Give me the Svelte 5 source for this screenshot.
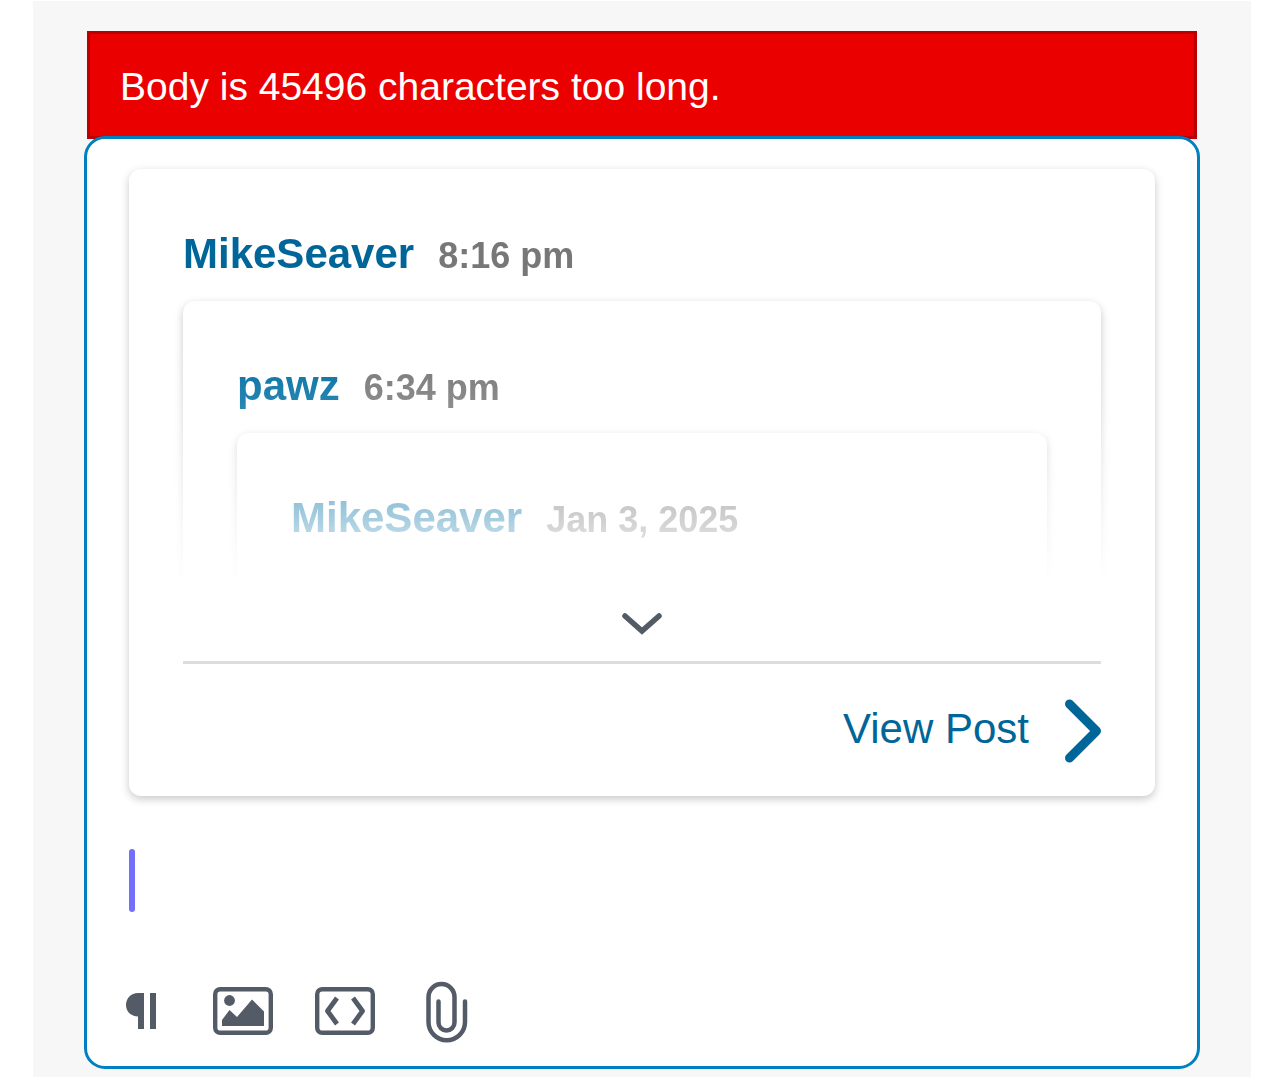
<!--
  Post editor with an embedded quote card and a validation error
-->

<script>
  let body = $state('');
  let expanded = $state(false);

  const error = 'Body is 45496 characters too long.';

  const quote = {
    user: 'MikeSeaver',
    time: '8:16 pm',
    quote: {
      user: 'pawz',
      time: '6:34 pm',
      quote: { user: 'MikeSeaver', time: 'Jan 3, 2025' }
    }
  };
</script>

{#snippet post(item)}
  <header class="meta">
    <a class="user" href="#profile">{item.user}</a>
    <time class="time">{item.time}</time>
  </header>
  {#if item.quote}
    <blockquote class="card nested">
      {@render post(item.quote)}
    </blockquote>
  {/if}
{/snippet}

<main class="page">
  <div class="error" role="alert">{error}</div>

  <form class="editor">
    <article class="card quote">
      <div class="preview" class:expanded>
        {@render post(quote)}
      </div>
      <button
        type="button"
        class="expand"
        aria-label="Expand quote"
        aria-expanded={expanded}
        onclick={() => (expanded = !expanded)}
      >
        <svg width="40" height="24" viewBox="0 0 40 24" aria-hidden="true">
          <path d="M3 4 20 19 37 4" fill="none" stroke="currentColor" stroke-width="5.6" stroke-linecap="round" />
        </svg>
      </button>
      <footer class="card-footer">
        <a class="view" href="#post">
          View Post
          <svg width="36" height="64" viewBox="0 0 36 64" aria-hidden="true">
            <path d="M4.500 5 31.500 32 4.500 59" fill="none" stroke="currentColor" stroke-width="9" stroke-linecap="round" stroke-linejoin="round" />
          </svg>
        </a>
      </footer>
    </article>

    <div class="field">
      <span class="caret" aria-hidden="true"></span>
      <textarea class="input" aria-label="Body" rows="1" bind:value={body}></textarea>
    </div>

    <div class="toolbar" role="toolbar" aria-label="Formatting">
      <button type="button" class="tool format" aria-label="Paragraph format">
        <svg width="30" height="36" viewBox="0 0 30 36" aria-hidden="true">
          <path d="M12 0h6v36h-6V23.500C5 23.500 0 18.500 0 12S5 0 12 0zM24 0h6v36h-6z" fill="currentColor" />
        </svg>
      </button>
      <button type="button" class="tool" aria-label="Insert image">
        <svg width="60" height="48" viewBox="0 0 60 48" aria-hidden="true">
          <rect x="2.200" y="2.200" width="55.600" height="43.600" rx="5" fill="none" stroke="currentColor" stroke-width="4.400" />
          <circle cx="16.500" cy="13.500" r="5.400" fill="currentColor" />
          <path d="M9 39V33L16.500 23 24 30 39 12.500 51 24.500V39z" fill="currentColor" />
        </svg>
      </button>
      <button type="button" class="tool" aria-label="Toggle HTML view">
        <svg width="60" height="48" viewBox="0 0 60 48" aria-hidden="true">
          <rect x="2.200" y="2.200" width="55.600" height="43.600" rx="5" fill="none" stroke="currentColor" stroke-width="4.400" />
          <path d="M22 11 12.500 24 22 37M38 11 47.500 24 38 37" fill="none" stroke="currentColor" stroke-width="4.800" stroke-linejoin="round" />
        </svg>
      </button>
      <button type="button" class="tool attach" aria-label="Attach a file">
        <svg width="42" height="62" viewBox="0 0 42 62" aria-hidden="true">
          <path d="M39 20.500V41a18.250 18.250 0 0 1-36.500 0V16a13 13 0 0 1 26 0V41.500a8 8 0 0 1-16 0V20.500" fill="none" stroke="currentColor" stroke-width="4.500" stroke-linecap="round" />
        </svg>
      </button>
    </div>
  </form>
</main>

<style>
  :global(body) {
    background: #fff;
  }

  .page {
    box-sizing: border-box;
    min-height: 100vh;
    margin: 0 33px;
    padding: 30px 51px 8px;
    border-top: 1px solid #fff;
    background: #f7f7f7;
    font-family: 'Liberation Sans', Arial, sans-serif;
  }

  button {
    padding: 0;
    border: 0;
    background: none;
    color: #535b66;
    cursor: pointer;
  }

  svg {
    display: block;
  }

  /* Validation message, overlapped by the top edge of the editor */
  .error {
    margin: 0 3px -3px;
    padding: 32px 30px 28px;
    border: 3px solid #ba0000;
    background: #eb0000;
    color: #fff;
    font-size: 39px;
    line-height: 42px;
  }

  .editor {
    position: relative;
    padding: 30px 42px 23px;
    border: 3px solid #0080c0;
    border-radius: 21px;
    background: #fff;
  }

  /* Quote card */
  .card {
    padding: 54px;
    border-radius: 12px;
    background: #fff;
    box-shadow: 0 3px 9px rgba(0, 0, 0, 0.22);
  }

  .quote {
    padding-bottom: 33px;
  }

  .nested {
    margin: 14px 0 0;
  }

  .preview {
    height: 372px;
    margin: 0 -12px;
    padding: 0 12px;
    overflow: hidden;
    mask-image: linear-gradient(#000 128px, rgba(0, 0, 0, 0.85) 180px, rgba(0, 0, 0, 0.34) 297px, transparent 362px);
  }

  .preview.expanded {
    height: auto;
    mask-image: none;
  }

  .meta {
    display: flex;
    align-items: baseline;
    gap: 24px;
    line-height: 62px;
  }

  .user {
    color: #069;
    font-size: 42px;
    font-weight: 700;
    text-decoration: none;
  }

  .nested .user {
    color: #006fa3;
  }

  .time {
    color: #777;
    font-size: 36px;
    font-weight: 700;
  }

  .expand {
    display: flex;
    justify-content: center;
    width: 100%;
    padding: 17px 0 25px;
  }

  .card-footer {
    display: flex;
    justify-content: flex-end;
    padding-top: 35px;
    border-top: 3px solid #ddd;
  }

  .view {
    display: flex;
    align-items: flex-start;
    gap: 36px;
    color: #069;
    font-size: 42px;
    line-height: 60px;
    text-decoration: none;
  }

  /* Text entry */
  .field {
    display: flex;
    height: 63px;
    margin-top: 53px;
  }

  .caret {
    width: 6px;
    border-radius: 3px;
    background: #736ffa;
  }

  .input {
    flex: 1;
    padding: 0;
    border: 0;
    outline: 0;
    resize: none;
    background: none;
    font: inherit;
    font-size: 48px;
    line-height: 63px;
    caret-color: #736ffa;
  }

  .toolbar {
    display: flex;
    align-items: center;
    gap: 42px;
    margin-top: 67px;
  }

  .format {
    margin: 0 15px 0 -3px;
  }

  .attach {
    margin: 2px 0 0 9px;
  }
</style>
